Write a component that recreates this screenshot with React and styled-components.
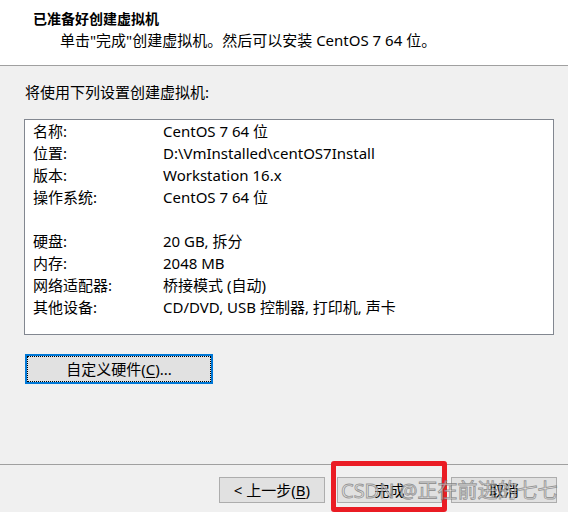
import React from "react";
import styled, { createGlobalStyle } from "styled-components";

const Global = createGlobalStyle`
  html, body { margin: 0; padding: 0; }
  body {
    background: #f0f0f0;
    font-family: "Noto Sans", "Noto Sans CJK SC", sans-serif;
    color: #000;
    overflow: hidden;
  }
`;

const Dialog = styled.div`
  position: relative;
  width: 568px;
  height: 512px;
  display: flex;
  flex-direction: column;
  background: #f0f0f0;
`;

const Header = styled.header`
  height: 65px;
  background: #fff;
  border-bottom: 1px solid #a0a0a0;
  display: flex;
  flex-direction: column;
  box-sizing: content-box;
`;

const Title = styled.h1`
  margin: 8px 0 0 33px;
  font-family: "Noto Sans CJK SC", sans-serif;
  font-size: 14px;
  font-weight: 700;
  line-height: 20px;
`;

const Subtitle = styled.p`
  margin: 2px 0 0 60px;
  font-family: "Noto Sans", "Noto Sans CJK SC", sans-serif;
  font-size: 15px;
  line-height: 20px;
`;

const Content = styled.main`
  height: 398px;
  padding-left: 24px;
  display: flex;
  flex-direction: column;
  align-items: flex-start;
`;

const Intro = styled.div`
  margin-top: 15px;
  padding-left: 1px;
  font-size: 15px;
  line-height: 22px;
`;

const SummaryBox = styled.div`
  margin-top: 16px;
  width: 530px;
  height: 216px;
  box-sizing: border-box;
  border: 1px solid #828790;
  background: #fff;
  display: flex;
  flex-direction: column;
`;

const Row = styled.div`
  display: grid;
  grid-template-columns: 130px 1fr;
  padding-left: 8px;
  height: 22px;
  line-height: 22px;
  font-size: 15px;
  white-space: nowrap;
`;

const Gap = styled.div`
  height: 22px;
`;

const CustomButton = styled.button`
  margin: 19px 0 0 1px;
  width: 188px;
  height: 30px;
  box-sizing: border-box;
  background: #e1e1e1;
  border: 2px solid #0078d7;
  outline: 1px dotted #000;
  outline-offset: -3px;
  font-family: inherit;
  font-size: 15px;
  color: #000;
  padding: 0;
  line-height: 24px;
`;

const Footer = styled.footer`
  flex: 1;
  border-top: 1px solid #a0a0a0;
  display: flex;
  align-items: flex-start;
  padding-top: 12px;
`;

const NavButton = styled.button`
  margin-left: ${(p) => p.$gap}px;
  width: ${(p) => p.$w}px;
  height: 26px;
  box-sizing: border-box;
  background: #e1e1e1;
  border: 1px solid #adadad;
  font-family: inherit;
  font-size: 15px;
  color: #000;
  padding: 0;
  line-height: 22px;
`;

const Key = styled.span`
  text-decoration: underline;
  text-underline-offset: 2px;
`;

const RedMark = styled.div`
  position: absolute;
  left: 331px;
  top: 461px;
  width: 116px;
  height: 51px;
  box-sizing: border-box;
  border: 5px solid #ea1c24;
  border-radius: 3px;
  pointer-events: none;
`;

const Watermark = styled.div`
  position: absolute;
  left: 341px;
  top: 478px;
  font-family: "Noto Sans", "Noto Sans CJK SC", sans-serif;
  font-size: 20px;
  line-height: 26px;
  white-space: nowrap;
  color: rgba(240, 240, 240, 0.6);
  -webkit-text-stroke: 0.9px rgba(95, 95, 95, 0.6);
  pointer-events: none;
`;

const rows = [
  ["名称:", "CentOS 7 64 位"],
  ["位置:", "D:\\VmInstalled\\centOS7Install"],
  ["版本:", "Workstation 16.x"],
  ["操作系统:", "CentOS 7 64 位"],
  null,
  ["硬盘:", "20 GB, 拆分"],
  ["内存:", "2048 MB"],
  ["网络适配器:", "桥接模式 (自动)"],
  ["其他设备:", "CD/DVD, USB 控制器, 打印机, 声卡"],
];

export default function App() {
  return (
    <>
      <Global />
      <Dialog>
        <Header>
          <Title>已准备好创建虚拟机</Title>
          <Subtitle>单击"完成"创建虚拟机。然后可以安装 CentOS 7 64 位。</Subtitle>
        </Header>
        <Content>
          <Intro>将使用下列设置创建虚拟机:</Intro>
          <SummaryBox>
            {rows.map((r, i) =>
              r ? (
                <Row key={i}>
                  <span>{r[0]}</span>
                  <span>{r[1]}</span>
                </Row>
              ) : (
                <Gap key={i} />
              )
            )}
          </SummaryBox>
          <CustomButton>
            自定义硬件(<Key>C</Key>)...
          </CustomButton>
        </Content>
        <Footer>
          <NavButton $gap={219} $w={106}>
            &lt; 上一步(<Key>B</Key>)
          </NavButton>
          <NavButton $gap={12} $w={105}>完成</NavButton>
          <NavButton $gap={9} $w={106}>取消</NavButton>
        </Footer>
        <RedMark />
        <Watermark>CSDN @正在前进的七七</Watermark>
      </Dialog>
    </>
  );
}
